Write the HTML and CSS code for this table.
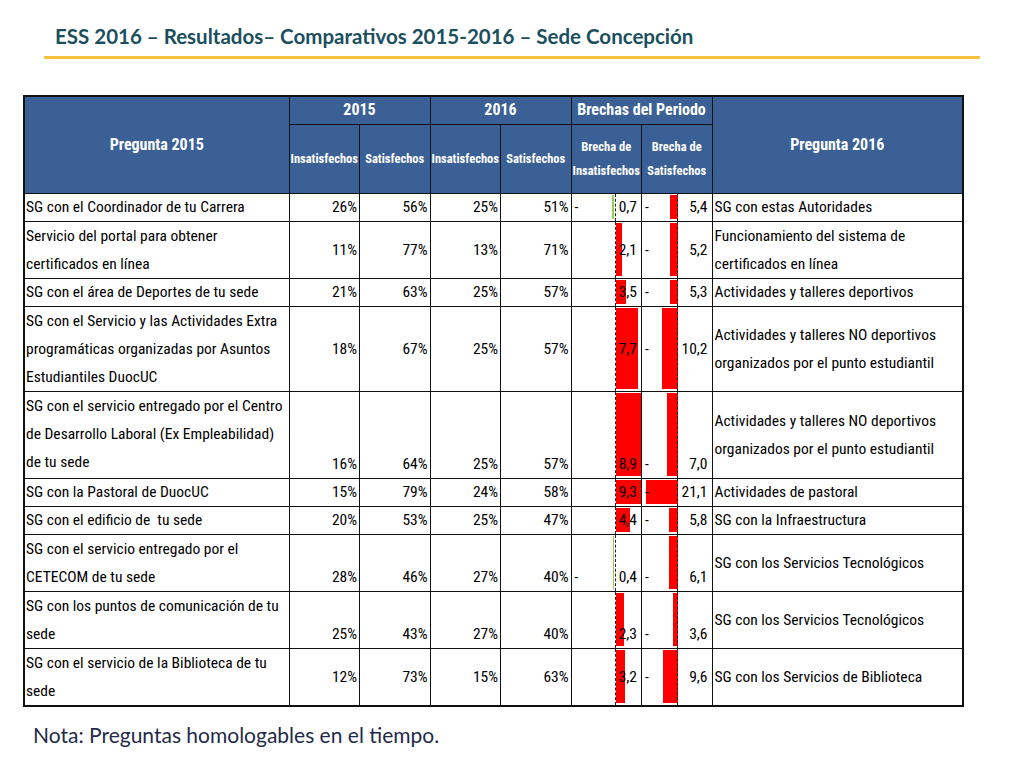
FILE: index.html
```html
<!DOCTYPE html>
<html lang="es">
<head>
<meta charset="utf-8">
<title>ESS 2016 – Resultados – Sede Concepción</title>
<link rel="stylesheet" href="styles.css">
</head>
<body>
<header class="slide-head">
  <h1 class="slide-title">ESS 2016 – Resultados– Comparativos 2015-2016 – Sede Concepción</h1>
  <div class="rule"></div>
</header>

<table class="grid">
  <colgroup>
    <col class="c-q"><col class="c-n"><col class="c-n"><col class="c-n"><col class="c-n"><col class="c-n"><col class="c-n"><col class="c-q2">
  </colgroup>
  <thead>
    <tr class="h1">
      <th rowspan="2" class="big">Pregunta 2015</th>
      <th colspan="2" class="big">2015</th>
      <th colspan="2" class="big">2016</th>
      <th colspan="2" class="big">Brechas del Periodo</th>
      <th rowspan="2" class="big">Pregunta 2016</th>
    </tr>
    <tr class="h2">
      <th>Insatisfechos</th>
      <th>Satisfechos</th>
      <th>Insatisfechos</th>
      <th>Satisfechos</th>
      <th class="two">Brecha de<br>Insatisfechos</th>
      <th class="two">Brecha de<br>Satisfechos</th>
    </tr>
  </thead>
  <tbody>
    <tr class="r1 mid">
      <td class="q">SG con el Coordinador de tu Carrera</td>
      <td class="n">26%</td><td class="n">56%</td><td class="n">25%</td><td class="n">51%</td>
      <td class="gap gi"><div class="bar neg" style="width:2px"></div><span class="axis"></span><span class="dash">-</span><span class="v">0,7</span></td>
      <td class="gap gs"><div class="bar" style="width:8px"></div><span class="axis"></span><span class="dash">-</span><span class="v">5,4</span></td>
      <td class="q2">SG con estas Autoridades</td>
    </tr>
    <tr class="r2 mid">
      <td class="q">Servicio del portal para obtener<br>certificados en línea</td>
      <td class="n">11%</td><td class="n">77%</td><td class="n">13%</td><td class="n">71%</td>
      <td class="gap gi"><div class="bar" style="width:6px"></div><span class="axis"></span><span class="v">2,1</span></td>
      <td class="gap gs"><div class="bar" style="width:8px"></div><span class="axis"></span><span class="dash">-</span><span class="v">5,2</span></td>
      <td class="q2">Funcionamiento del sistema de<br>certificados en línea</td>
    </tr>
    <tr class="r1 mid">
      <td class="q">SG con el área de Deportes de tu sede</td>
      <td class="n">21%</td><td class="n">63%</td><td class="n">25%</td><td class="n">57%</td>
      <td class="gap gi"><div class="bar" style="width:10px"></div><span class="axis"></span><span class="v">3,5</span></td>
      <td class="gap gs"><div class="bar" style="width:8px"></div><span class="axis"></span><span class="dash">-</span><span class="v">5,3</span></td>
      <td class="q2">Actividades y talleres deportivos</td>
    </tr>
    <tr class="r4 mid">
      <td class="q">SG con el Servicio y las Actividades Extra<br>programáticas organizadas por Asuntos<br>Estudiantiles DuocUC</td>
      <td class="n">18%</td><td class="n">67%</td><td class="n">25%</td><td class="n">57%</td>
      <td class="gap gi"><div class="bar" style="width:22px"></div><span class="axis"></span><span class="v">7,7</span></td>
      <td class="gap gs"><div class="bar" style="width:16px"></div><span class="axis"></span><span class="dash">-</span><span class="v">10,2</span></td>
      <td class="q2">Actividades y talleres NO deportivos<br>organizados por el punto estudiantil</td>
    </tr>
    <tr class="r5 bot">
      <td class="q">SG con el servicio entregado por el Centro<br>de Desarrollo Laboral (Ex Empleabilidad)<br>de tu sede</td>
      <td class="n">16%</td><td class="n">64%</td><td class="n">25%</td><td class="n">57%</td>
      <td class="gap gi"><div class="bar" style="width:25px"></div><span class="axis"></span><span class="v">8,9</span></td>
      <td class="gap gs"><div class="bar" style="width:11px"></div><span class="axis"></span><span class="dash">-</span><span class="v">7,0</span></td>
      <td class="q2">Actividades y talleres NO deportivos<br>organizados por el punto estudiantil</td>
    </tr>
    <tr class="r1 mid">
      <td class="q">SG con la Pastoral de DuocUC</td>
      <td class="n">15%</td><td class="n">79%</td><td class="n">24%</td><td class="n">58%</td>
      <td class="gap gi"><div class="bar" style="width:25px"></div><span class="axis"></span><span class="v">9,3</span></td>
      <td class="gap gs"><div class="bar" style="width:32px"></div><span class="axis"></span><span class="dash">-</span><span class="v">21,1</span></td>
      <td class="q2">Actividades de pastoral</td>
    </tr>
    <tr class="r1 mid">
      <td class="q">SG con el edificio de&nbsp; tu sede</td>
      <td class="n">20%</td><td class="n">53%</td><td class="n">25%</td><td class="n">47%</td>
      <td class="gap gi"><div class="bar" style="width:14px"></div><span class="axis"></span><span class="v">4,4</span></td>
      <td class="gap gs"><div class="bar" style="width:9px"></div><span class="axis"></span><span class="dash">-</span><span class="v">5,8</span></td>
      <td class="q2">SG con la Infraestructura</td>
    </tr>
    <tr class="r2 bot">
      <td class="q">SG con el servicio entregado por el<br>CETECOM de tu sede</td>
      <td class="n">28%</td><td class="n">46%</td><td class="n">27%</td><td class="n">40%</td>
      <td class="gap gi"><div class="bar neg" style="width:1px"></div><span class="axis"></span><span class="dash">-</span><span class="v">0,4</span></td>
      <td class="gap gs"><div class="bar" style="width:9px"></div><span class="axis"></span><span class="dash">-</span><span class="v">6,1</span></td>
      <td class="q2">SG con los Servicios Tecnológicos</td>
    </tr>
    <tr class="r2 bot">
      <td class="q">SG con los puntos de comunicación de tu<br>sede</td>
      <td class="n">25%</td><td class="n">43%</td><td class="n">27%</td><td class="n">40%</td>
      <td class="gap gi"><div class="bar" style="width:8px"></div><span class="axis"></span><span class="v">2,3</span></td>
      <td class="gap gs"><div class="bar" style="width:5px"></div><span class="axis"></span><span class="dash">-</span><span class="v">3,6</span></td>
      <td class="q2">SG con los Servicios Tecnológicos</td>
    </tr>
    <tr class="r2 mid last">
      <td class="q">SG con el servicio de la Biblioteca de tu<br>sede</td>
      <td class="n">12%</td><td class="n">73%</td><td class="n">15%</td><td class="n">63%</td>
      <td class="gap gi"><div class="bar" style="width:9px"></div><span class="axis"></span><span class="v">3,2</span></td>
      <td class="gap gs"><div class="bar" style="width:15px"></div><span class="axis"></span><span class="dash">-</span><span class="v">9,6</span></td>
      <td class="q2">SG con los Servicios de Biblioteca</td>
    </tr>
  </tbody>
</table>

<p class="note">Nota: Preguntas homologables en el tiempo.</p>
</body>
</html>
```

FILE: styles.css
```css
html, body {
  margin: 0;
  padding: 0;
  background: #ffffff;
}

body {
  width: 1024px;
  height: 768px;
  overflow: hidden;
  font-family: "Lato", "Liberation Sans", sans-serif;
}

.slide-head {
  padding-top: 24px;
}

.slide-title {
  margin: 0 0 0 55px;
  font-family: "Lato", "Liberation Sans", sans-serif;
  font-weight: 700;
  font-size: 20.5px;
  line-height: 24px;
  color: #1b4f60;
  white-space: nowrap;
}

.rule {
  margin: 8px 0 0 44px;
  width: 936px;
  height: 3px;
  background: #f4c23e;
}

.grid {
  margin: 36px 0 0 23px;
  border-collapse: collapse;
  table-layout: fixed;
  width: 939px;
  border: 2px solid #111;
  font-family: "Roboto Condensed", "DejaVu Sans Condensed", sans-serif;
  color: #000;
}

.c-q { width: 265px; }
.c-n { width: 70.5px; }
.c-q2 { width: 251px; }

.grid th,
.grid td {
  border: 1px solid #111;
  padding: 0;
  white-space: nowrap;
  overflow: hidden;
}

.grid thead th {
  background: #3a6096;
  color: #ffffff;
  font-weight: 700;
  font-size: 12.5px;
  line-height: 24px;
  text-align: center;
  vertical-align: middle;
}

.grid thead th.big {
  font-size: 16px;
}

.grid thead .h1 { height: 28px; }
.grid thead .h2 { height: 69px; }

.grid tbody td {
  font-size: 15.5px;
  line-height: 28px;
}

.grid tbody .r1 td { line-height: 26px; }

.r1 { height: 28px; }
.r2 { height: 57px; }
.r4 { height: 85px; }
.r5 { height: 87px; }

.grid td.q {
  vertical-align: top;
  text-align: left;
  padding-left: 1px;
}

.grid td.q2 {
  vertical-align: middle;
  text-align: left;
  padding-left: 2px;
}

.grid td.n {
  text-align: right;
  padding-right: 2px;
}

.mid td.n, .mid td.gap { vertical-align: middle; }
.bot td.n, .bot td.gap { vertical-align: bottom; }

.grid td.gap {
  position: relative;
  text-align: right;
  padding-right: 4px;
}

.gap .dash {
  position: absolute;
  left: 3px;
  bottom: 0;
  line-height: 28px;
}

.mid .gap .dash {
  bottom: auto;
  top: 50%;
  transform: translateY(-50%);
}

.gap .v {
  position: relative;
}

.gap .bar {
  position: absolute;
  top: 1px;
  bottom: 2px;
  background: #ff0000;
}

.gi .bar { left: 44px; }
.gi .bar.neg {
  left: auto;
  right: 27px;
  background: #92d050;
}
.gs .bar { right: 34px; }

.gap .axis {
  position: absolute;
  top: 0;
  bottom: 0;
  width: 0;
  border-left: 1px dashed #222;
}

.gi .axis { left: 43px; }
.gs .axis { right: 34px; }

.note {
  margin: 15px 0 0 33px;
  font-family: "Lato", "Liberation Sans", sans-serif;
  font-size: 21px;
  line-height: 26px;
  color: #1f2b48;
}
```
